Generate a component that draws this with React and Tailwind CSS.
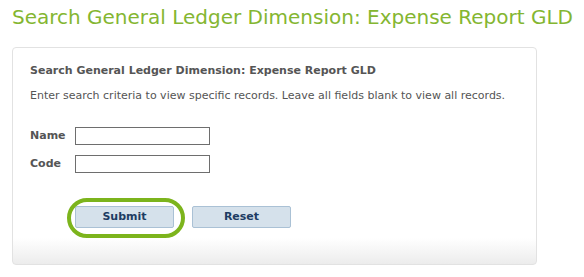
export default function App() {
  return (
    <div className="w-[584px] h-[277px] bg-white overflow-hidden" style={{ fontFamily: '"DejaVu Sans", Verdana, sans-serif' }}>
      <h1 className="pl-[12px] pt-[6px] text-[20px] leading-[23px] text-[#84b631]">
        Search General Ledger Dimension: Expense Report GLD
      </h1>
      <div className="ml-[12px] mt-[18px] w-[525px] h-[218px] rounded-[4px] border border-[#e2e2e2] bg-gradient-to-b from-white from-[88%] to-[#ececec] px-[17px] pt-[16px]">
        <h2 className="text-[11px] leading-[14px] font-bold text-[#555]">
          Search General Ledger Dimension: Expense Report GLD
        </h2>
        <p className="mt-[11px] text-[11px] leading-[14px] text-[#555]">
          Enter search criteria to view specific records. Leave all fields blank to view all records.
        </p>
        <div className="mt-[24px] flex flex-col gap-[10px]">
          <div className="flex items-center">
            <label className="w-[45px] text-[11px] font-bold text-[#555]">Name</label>
            <input className="w-[135px] h-[18px] border border-[#6e6e6e] bg-white" />
          </div>
          <div className="flex items-center">
            <label className="w-[45px] text-[11px] font-bold text-[#555]">Code</label>
            <input className="w-[135px] h-[18px] border border-[#6e6e6e] bg-white" />
          </div>
        </div>
        <div className="mt-[33px] ml-[45px] flex items-start gap-[18px]">
          <div className="relative">
            <button className="block w-[99px] h-[22px] rounded-[2px] border border-[#aac1d5] bg-[#d5e1eb] text-[11px] font-bold text-[#1d3c63]">
              Submit
            </button>
            <div className="absolute left-[-8px] top-[-8px] w-[118px] h-[40px] rounded-[20px] border-[4px] border-[#7cb41c]" />
          </div>
          <button className="block w-[99px] h-[22px] rounded-[2px] border border-[#aac1d5] bg-[#d5e1eb] text-[11px] font-bold text-[#1d3c63]">
            Reset
          </button>
        </div>
      </div>
    </div>
  );
}
